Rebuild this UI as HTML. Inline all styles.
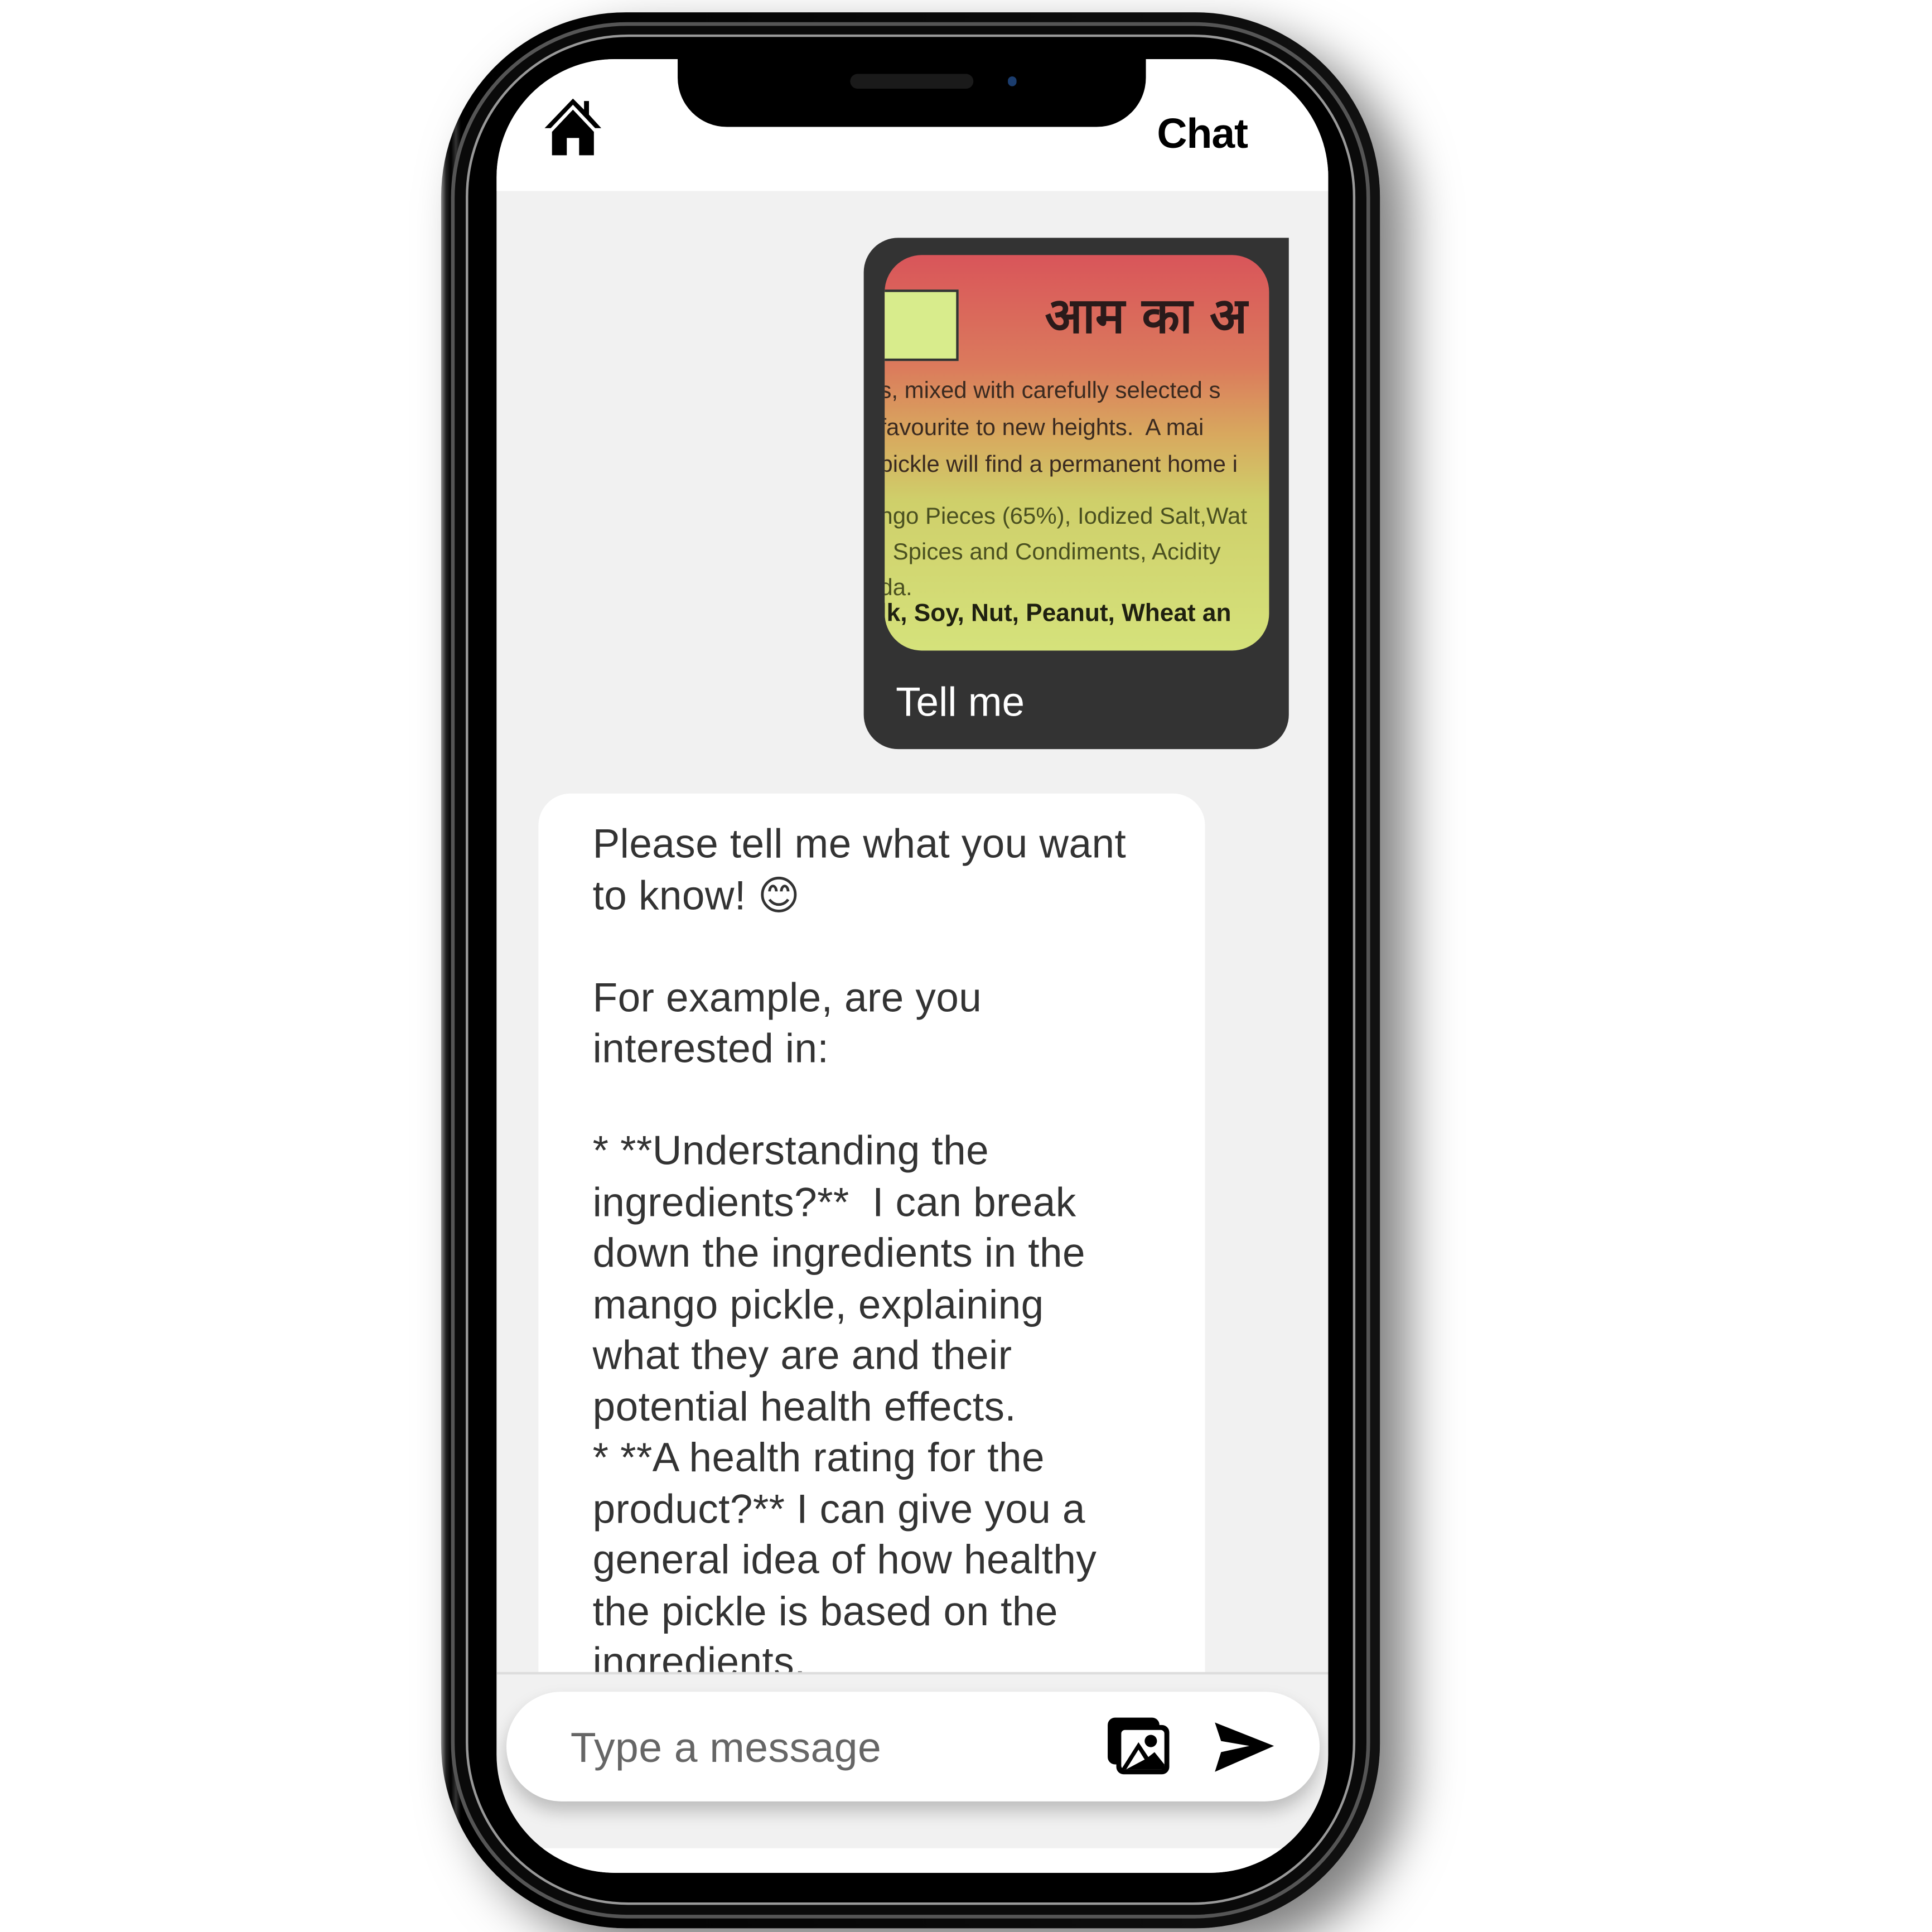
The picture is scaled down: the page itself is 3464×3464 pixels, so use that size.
<!DOCTYPE html>
<html><head><meta charset="utf-8"><style>
html,body{margin:0;padding:0;background:#fff;width:3464px;height:3464px;overflow:hidden}
#w{position:absolute;left:0;top:0;width:1568px;height:1568px;transform:scale(2.20918);transform-origin:0 0;font-family:"Liberation Sans","DejaVu Sans",sans-serif}
.abs{position:absolute}
#shadow{left:358px;top:10px;width:762px;height:1555px;border-radius:150px;box-shadow:22px 18px 40px rgba(0,0,0,.5)}
#body{left:358px;top:10px;width:762px;height:1555px;border-radius:150px;background:linear-gradient(90deg,#888 0,#222 4px,#000 8px,#333 12px,#000 16px,#111 100%);}
#body2{left:366px;top:18px;width:746px;height:1539px;border-radius:143px;background:#0a0a0a;border:3px solid #555;box-sizing:border-box}
#body3{left:378px;top:28px;width:722px;height:1518px;border-radius:132px;background:#000;border:2px solid #999;box-sizing:border-box}
#screen{left:403px;top:48px;width:675px;height:1472px;border-radius:96px;background:#f1f1f1;overflow:hidden}
#hdr{left:0;top:0;width:675px;height:107px;background:#fff}
#notch{left:147px;top:0;width:380px;height:55px;background:#000;border-radius:0 0 40px 40px}
.t{font-size:33px;color:#333;line-height:41.5px;white-space:pre;letter-spacing:0.2px}
</style></head><body><div id="w">
<div class="abs" id="shadow"></div>
<div class="abs" id="body"></div>
<div class="abs" id="body2"></div>
<div class="abs" id="body3"></div>
<div class="abs" id="screen">
 <div class="abs" id="hdr"></div>
 <div class="abs" id="notch">
   <div class="abs" style="left:140px;top:12px;width:100px;height:12px;border-radius:6px;background:#1a1a1a"></div>
   <div class="abs" style="left:268px;top:14px;width:7px;height:8px;border-radius:4px;background:#1b3d6e"></div>
 </div>
 <svg class="abs" style="left:37px;top:30px" width="50" height="50" viewBox="0 0 50 50">
  <path d="M25 2 L2 26 L7 26 L25 7 L43 26 L48 26 L38 15 L38 4 L34 4 L34 11 Z" fill="#000"/>
  <path d="M25 11 L8 29 L8 48 L20 48 L20 34 L30 34 L30 48 L42 48 L42 29 Z" fill="#000"/>
 </svg>
 <div class="abs" style="left:536px;top:42px;font-size:34px;font-weight:bold;color:#000;letter-spacing:-0.5px">Chat</div>

 <div class="abs" style="left:298px;top:145px;width:345px;height:415px;background:#333;border-radius:28px 0 28px 28px">
  <div class="abs" style="left:17px;top:14px;width:312px;height:321px;border-radius:30px;overflow:hidden;background:linear-gradient(180deg,#d9555a 0%,#db7a5c 28%,#d8a75e 45%,#cfcf6a 62%,#d5e27b 100%)">
   <div class="abs" style="left:-10px;top:28px;width:70px;height:58px;background:#d8ec8c;border:2px solid #333;box-sizing:border-box"></div>
   <div class="abs" style="left:130px;top:20px;font-size:40px;color:#2a1a1a;font-weight:bold;white-space:nowrap;font-family:'DejaVu Sans',sans-serif">आम का अ</div>
   <div class="abs" style="left:-4px;top:96px;font-size:19px;color:#3a2a20;line-height:30px;white-space:pre">s, mixed with carefully selected s
favourite to new heights.  A mai
pickle will find a permanent home i</div>
   <div class="abs" style="left:-4px;top:198px;font-size:19px;color:#4a5020;line-height:29px;white-space:pre">ngo Pieces (65%), Iodized Salt,Wat
: Spices and Condiments, Acidity
da.</div>
   <div class="abs" style="left:-4px;top:280px;font-size:20px;font-weight:bold;color:#1f2010;white-space:pre">lk, Soy, Nut, Peanut, Wheat an</div>
  </div>
  <div class="abs" style="left:26px;top:358px;font-size:33px;color:#fff">Tell me</div>
 </div>

 <div class="abs" style="left:34px;top:596px;width:541px;height:713px;background:#fff;border-radius:26px 26px 0 0;overflow:hidden">
  <div class="abs t" style="left:44px;top:20px">Please tell me what you want
to know! 😊

For example, are you
interested in:

* **Understanding the
ingredients?**  I can break
down the ingredients in the
mango pickle, explaining
what they are and their
potential health effects.
* **A health rating for the
product?** I can give you a
general idea of how healthy
the pickle is based on the
ingredients.</div>
 </div>
 <div class="abs" style="left:0;top:1309px;width:675px;height:2px;background:#ddd"></div>
 <div class="abs" style="left:0;top:1452px;width:675px;height:20px;background:#fff"></div>
 <div class="abs" style="left:8px;top:1325px;width:660px;height:89px;border-radius:45px;background:#fff;box-shadow:0 8px 14px rgba(0,0,0,.22)"></div>
 <div class="abs" style="left:60px;top:1352px;font-size:34px;color:#666;letter-spacing:0.2px">Type a message</div>
 <svg class="abs" style="left:494px;top:1344px" width="54" height="50" viewBox="0 0 54 50">
  <rect x="2" y="2" width="42" height="38" rx="6" fill="#000"/>
  <rect x="9" y="8" width="43" height="40" rx="6" fill="#000"/>
  <rect x="13" y="12" width="35" height="32" rx="3" fill="#fff"/>
  <circle cx="37" cy="21" r="5" fill="#000"/>
  <path d="M13 44 L27 22 L35 34 L40 30 L48 40 L48 44 Z" fill="#000"/>
  <path d="M17 44 L27 28 L32 36 Z" fill="#fff"/>
 </svg>
 <svg class="abs" style="left:581px;top:1348px" width="52" height="44" viewBox="0 0 52 44">
  <path d="M2 2 L50 21 L2 42 L7 26 L30 21 L7 17 Z" fill="#000"/>
 </svg>
</div>
</div></body></html>
